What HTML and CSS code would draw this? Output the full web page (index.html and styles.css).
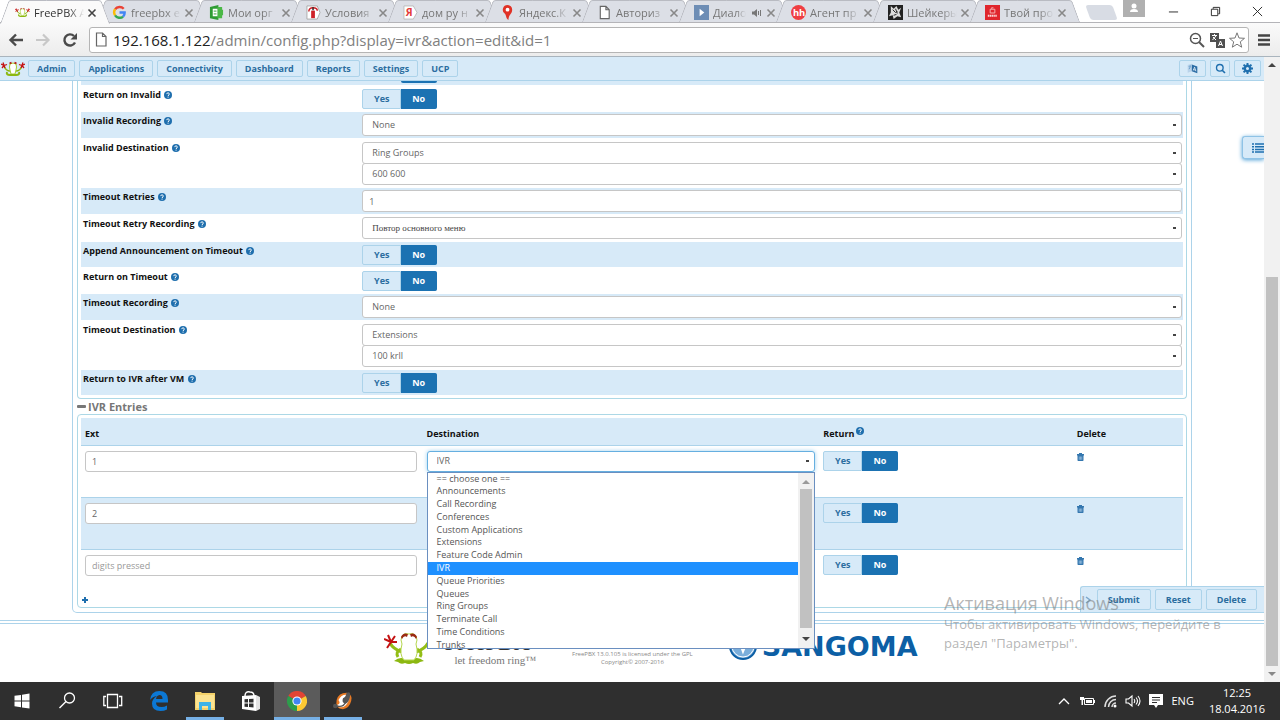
FILE: index.html
```html
<!DOCTYPE html>
<html lang="en">
<head>
<meta charset="utf-8">
<title>FreePBX Administration</title>
<link rel="stylesheet" href="styles.css">
</head>
<body>
<svg class="defs" aria-hidden="true">
  <symbol id="help" viewBox="0 0 16 16"><circle cx="8" cy="8" r="8" fill="currentColor"/><path d="M5.4 6.2C5.4 3 10.7 3 10.7 6.1 10.7 8 8.1 8 8.1 10M8.1 11.3v2" fill="none" stroke="#fff" stroke-width="2"/></symbol>
  <symbol id="trash" viewBox="0 0 14 16"><path d="M0 2h4V0h6v2h4v3H0zM1 5h12v9.500q0 1.500-1.500 1.500h-9Q1 16 1 14.500z" fill="currentColor"/><path d="M4.500 7v6.500M7 7v6.500M9.500 7v6.500" stroke="#d7eaf8"/></symbol>
  <symbol id="x" viewBox="0 0 10 10"><path d="M1.500 1.500l7 7M8.500 1.500l-7 7" fill="none" stroke="currentColor" stroke-width="1.600"/></symbol>
  <symbol id="page" viewBox="0 0 16 16"><path d="M3.500 1.500h6l3.500 3.500v9.500h-9.500zM9.500 1.500v3.500h3.500" fill="#fff" stroke="#666" stroke-width="1.200"/></symbol>
  <symbol id="frog" viewBox="0 0 24 16">
    <path d="M3 5q2 5 6 5M21 5q-2 5-6 5" fill="none" stroke="#8cb811" stroke-width="1.500"/>
    <path d="M9 3q3-2 6 0 1 3 0 6l-1 4h-4L9 9q-1-3 0-6z" fill="#fff" stroke="#a5cb2c"/>
    <path d="M6 11q-1 3 3 3h6q4 0 3-3" fill="none" stroke="#8cb811" stroke-width="2"/>
    <path d="M8.500 2.500l2-1M13.500 1.500l2 1" stroke="#b5120f" stroke-width="1.600"/>
    <path d="M0 3l3 1.500L1 7M2 1.500l1 3 3-1M3 4.500L4 7M24 3l-3 1.500L23 7M22 1.500l-1 3-3-1M21 4.500L20 7" stroke="#c41212" stroke-width="1.300" fill="none"/>
  </symbol>
</svg>

<header class="tabstrip">
  <div class="tab active"><svg class="fav"><use href="#frog"/></svg><span class="title">FreePBX A</span><button class="tabx" aria-label="Close tab"><svg><use href="#x"/></svg></button></div>
  <div class="tab"><svg class="fav" viewBox="0 0 16 16" fill="none" stroke-width="2.600"><path d="M12.500 4A6 6 0 0 0 3.300 4.500" stroke="#ea4335"/><path d="M3.300 4.500a6 6 0 0 0 0 6.500" stroke="#fbbc05"/><path d="M3.300 11a6 6 0 0 0 8.500 1.500" stroke="#34a853"/><path d="M11.800 12.500A6 6 0 0 0 13.500 8H8" stroke="#4285f4"/></svg><span class="title">freepbx e</span><button class="tabx" aria-label="Close tab"><svg><use href="#x"/></svg></button></div>
  <div class="tab"><svg class="fav" viewBox="0 0 16 16"><path d="M1 2l9-2v16l-9-2z" fill="#2f9c34"/><path d="M9 2h5v3h1v6h-1v3H9z" fill="#4bb847"/><path d="M4 4h5v8H4z" fill="#fff"/><path d="M5 6.500h3M5 9.500h3" stroke="#2f9c34"/></svg><span class="title">Мои орг</span><button class="tabx" aria-label="Close tab"><svg><use href="#x"/></svg></button></div>
  <div class="tab"><svg class="fav" viewBox="0 0 16 16"><path d="M1 1h11l3 7-3 7H1z" fill="#fff" stroke="#aaa"/><path d="M5.500 6h4v8h-4z" fill="#cf2027"/><path d="M3 7q0-4 4.500-4T12 6" fill="none" stroke="#cf2027" stroke-width="1.600"/><path d="M7.500 5.500v-3" stroke="#222" stroke-width="1.500"/></svg><span class="title">Условия</span><button class="tabx" aria-label="Close tab"><svg><use href="#x"/></svg></button></div>
  <div class="tab"><svg class="fav" viewBox="0 0 16 16"><path d="M1 1h10l4 7-4 7H1z" fill="#fff" stroke="#bbb"/><text x="3" y="12" font-size="11" font-weight="700" fill="#e33a3a">Я</text></svg><span class="title">дом ру н</span><button class="tabx" aria-label="Close tab"><svg><use href="#x"/></svg></button></div>
  <div class="tab"><svg class="fav" viewBox="0 0 16 16"><path d="M8 0a5 5 0 0 1 5 5c0 5-4 5-4 11-3-2-2-5-4-7A5 5 0 0 1 8 0z" fill="#e03226"/><circle cx="8" cy="5" r="2" fill="#fff"/></svg><span class="title">Яндекс.К</span><button class="tabx" aria-label="Close tab"><svg><use href="#x"/></svg></button></div>
  <div class="tab"><svg class="fav"><use href="#page"/></svg><span class="title">Авториз</span><button class="tabx" aria-label="Close tab"><svg><use href="#x"/></svg></button></div>
  <div class="tab"><svg class="fav" viewBox="0 0 16 16"><path d="M0 0h16v16H0z" fill="#6d8db5"/><path d="M6 4l5 4-5 4z" fill="#fff"/></svg><span class="title short">Диало</span><svg class="sound" viewBox="0 0 10 10"><path d="M0 3.500h2L5 1v8L2 6.500H0z" fill="#777"/><path d="M6.500 3v4M8.500 2v6" stroke="#777"/></svg><button class="tabx" aria-label="Close tab"><svg><use href="#x"/></svg></button></div>
  <div class="tab"><svg class="fav" viewBox="0 0 16 16"><circle cx="8" cy="8" r="8" fill="#ef3e42"/><text x="2" y="12" font-size="10" font-weight="700" fill="#fff">hh</text></svg><span class="title">Агент пр</span><button class="tabx" aria-label="Close tab"><svg><use href="#x"/></svg></button></div>
  <div class="tab"><svg class="fav" viewBox="0 0 16 16"><path d="M0 0h16v16H0z" fill="#222"/><path d="M3 1l3 3 3-3 2 4 3-2-2 5 2 5-4-1-4 3-1-4-4 1 2-4z" fill="#ddd"/><path d="M5 5l3 3 2-1M6 11l3-1M8 4l2 5" stroke="#222" fill="none"/></svg><span class="title">Шейкеры</span><button class="tabx" aria-label="Close tab"><svg><use href="#x"/></svg></button></div>
  <div class="tab"><svg class="fav" viewBox="0 0 16 16"><path d="M0 0h16v16H0z" fill="#e0262d"/><path d="M5.500 4.500h5v4h-5zM7 4V3h2" fill="none" stroke="#f6b6b6"/><path d="M3 11.500h10" stroke="#fbdada" stroke-width="2" stroke-dasharray="1.500 .5"/></svg><span class="title">Твой про</span><button class="tabx" aria-label="Close tab"><svg><use href="#x"/></svg></button></div>
  <button class="newtab" aria-label="New tab"></button>
  <div class="winctl">
    <button class="user" aria-label="User"><svg viewBox="0 0 22 17"><circle cx="11" cy="6" r="2.500" fill="#fff"/><path d="M7 12q0-3 4-3t4 3z" fill="#fff"/></svg></button>
    <button aria-label="Minimize"><svg viewBox="0 0 12 12"><path d="M1 6.500h10" stroke="#222"/></svg></button>
    <button aria-label="Restore"><svg viewBox="0 0 12 12"><path d="M1.500 3.500h7v7h-7zM3.500 3V1.500h7v7H9" fill="none" stroke="#222"/></svg></button>
    <button aria-label="Close"><svg viewBox="0 0 12 12"><path d="M1 1l10 10M11 1L1 11" stroke="#222"/></svg></button>
  </div>
</header>

<div class="toolbar">
  <button class="tool" aria-label="Back"><svg viewBox="0 0 16 16"><path d="M15 8H3M8 2.500L2.500 8 8 13.500" fill="none" stroke="#4a4a4a" stroke-width="2.400"/></svg></button>
  <button class="tool" aria-label="Forward"><svg viewBox="0 0 16 16"><path d="M1 8h12M8 2.500L13.500 8 8 13.500" fill="none" stroke="#c8c8c8" stroke-width="2.200"/></svg></button>
  <button class="tool" aria-label="Reload"><svg viewBox="0 0 16 16"><path d="M13 10.500A5.600 5.600 0 1 1 12 4" fill="none" stroke="#4a4a4a" stroke-width="2.400"/><path d="M15 1v6.500H8.500z" fill="#4a4a4a"/></svg></button>
  <div class="omnibox">
    <svg class="pg"><use href="#page"/></svg>
    <span class="url"><b>192.168.1.122</b>/admin/config.php?display=ivr&amp;action=edit&amp;id=1</span>
    <svg class="oi" viewBox="0 0 16 16"><circle cx="6.500" cy="6.500" r="5" fill="none" stroke="#555" stroke-width="1.500"/><path d="M10 10l5 5" stroke="#555" stroke-width="2"/><path d="M4 6.500h5" stroke="#555"/></svg>
    <svg class="oi" viewBox="0 0 16 16"><path d="M1 1h9v9H1zM7 7h9v9H7z" fill="#505050"/><path d="M3 3.500h5M5.500 2v2M3.500 8l3.500-4M4 5l3 3M9.500 14l2-5 2 5M10 12.500h3" fill="none" stroke="#fff"/></svg>
    <svg class="oi" viewBox="0 0 16 16"><path d="M8 .8l2 5.200 5.500.3-4.200 3.500 1.400 5.400L8 12.200l-4.700 3 1.400-5.400L.5 6.300 6 6z" fill="#fff" stroke="#777"/></svg>
  </div>
  <button class="tool" aria-label="Menu"><svg viewBox="0 0 16 16"><path d="M2 3.500h12M2 8h12M2 12.500h12" stroke="#444" stroke-width="2.600"/></svg></button>
</div>

<div class="window">
  <div class="viewport">
    <nav class="nav">
      <svg class="logo"><use href="#frog"/></svg>
      <button>Admin</button><button>Applications</button><button>Connectivity</button><button>Dashboard</button><button>Reports</button><button>Settings</button><button>UCP</button>
      <span class="spacer"></span>
      <button class="ic" aria-label="Language"><svg viewBox="0 0 16 16"><path d="M1 3l6-2v11l-6 2z" fill="#b9d3ea"/><path d="M7 2l8 3v10l-8-3z" fill="#2a6ca5"/><path d="M2.500 5l3-1M3 9l2-4" fill="none" stroke="#4a86bb"/><path d="M9 11l2-5 2 6M9.500 9.500l3 1" fill="none" stroke="#fff"/></svg></button>
      <button class="ic narrow" aria-label="Search"><svg viewBox="0 0 16 16"><circle cx="7" cy="7" r="4.800" fill="none" stroke="#1f6fae" stroke-width="2"/><path d="M10.500 10.500l4 4" stroke="#1f6fae" stroke-width="2.400"/></svg></button>
      <button class="ic" aria-label="Settings"><svg viewBox="0 0 16 16"><circle cx="8" cy="8" r="4" fill="none" stroke="#1f6fae" stroke-width="3.600"/><path d="M8 0v3M8 13v3M0 8h3M13 8h3M2.300 2.300l2 2M11.700 11.700l2 2M2.300 13.700l2-2M11.700 4.300l2-2" stroke="#1f6fae" stroke-width="2.800"/></svg></button>
    </nav>

    <main class="page">
      <form class="outer">
        <section class="box top">
          <div class="row sliver"><span></span><div class="stub"><i></i></div></div>
          <div class="row radio"><span class="lbl">Return on Invalid <svg><use href="#help"/></svg></span><fieldset class="yn"><input type="radio" name="a" id="a1"><label for="a1">Yes</label><input type="radio" name="a" id="a2" checked><label for="a2">No</label></fieldset></div>
          <div class="row alt"><label class="lbl" for="s1">Invalid Recording <svg><use href="#help"/></svg></label><div class="ctl"><select id="s1"><option>None</option></select></div></div>
          <div class="row dest"><label class="lbl" for="s2">Invalid Destination <svg><use href="#help"/></svg></label><div class="ctl"><select id="s2"><option>Ring Groups</option></select><select aria-label="Ring group"><option>600 600</option></select></div></div>
          <div class="row alt"><label class="lbl" for="t1">Timeout Retries <svg><use href="#help"/></svg></label><div class="ctl"><input type="text" id="t1" value="1"></div></div>
          <div class="row"><label class="lbl" for="s3">Timeout Retry Recording <svg><use href="#help"/></svg></label><div class="ctl"><select id="s3" class="serif"><option>Повтор основного меню</option></select></div></div>
          <div class="row alt radio"><span class="lbl">Append Announcement on Timeout <svg><use href="#help"/></svg></span><fieldset class="yn"><input type="radio" name="b" id="b1"><label for="b1">Yes</label><input type="radio" name="b" id="b2" checked><label for="b2">No</label></fieldset></div>
          <div class="row radio"><span class="lbl">Return on Timeout <svg><use href="#help"/></svg></span><fieldset class="yn"><input type="radio" name="c" id="c1"><label for="c1">Yes</label><input type="radio" name="c" id="c2" checked><label for="c2">No</label></fieldset></div>
          <div class="row alt"><label class="lbl" for="s4">Timeout Recording <svg><use href="#help"/></svg></label><div class="ctl"><select id="s4"><option>None</option></select></div></div>
          <div class="row dest"><label class="lbl" for="s5">Timeout Destination <svg><use href="#help"/></svg></label><div class="ctl"><select id="s5"><option>Extensions</option></select><select aria-label="Extension"><option>100 krll</option></select></div></div>
          <div class="row alt radio"><span class="lbl">Return to IVR after VM <svg><use href="#help"/></svg></span><fieldset class="yn"><input type="radio" name="d" id="d1"><label for="d1">Yes</label><input type="radio" name="d" id="d2" checked><label for="d2">No</label></fieldset></div>
        </section>

        <h2 class="sect"><i></i>IVR Entries</h2>

        <section class="box">
          <table class="entries">
            <colgroup><col class="c1"><col class="c2"><col class="c3"><col class="c4"></colgroup>
            <thead><tr><th>Ext</th><th>Destination</th><th>Return<svg class="sup"><use href="#help"/></svg></th><th>Delete</th></tr></thead>
            <tbody>
              <tr>
                <td><input type="text" aria-label="Ext" value="1"></td>
                <td><div class="open"><select class="focus" aria-label="Destination"><option>IVR</option></select>
                  <div class="menu">
                    <ul class="opts" role="listbox" aria-label="Destination options">
                      <li>== choose one ==</li><li>Announcements</li><li>Call Recording</li><li>Conferences</li><li>Custom Applications</li><li>Extensions</li><li>Feature Code Admin</li><li class="sel">IVR</li><li>Queue Priorities</li><li>Queues</li><li>Ring Groups</li><li>Terminate Call</li><li>Time Conditions</li><li>Trunks</li>
                    </ul>
                    <div class="bar"><svg viewBox="0 0 8 8"><path d="M0 6h8L4 2z" fill="#9a9a9a"/></svg><i></i><svg viewBox="0 0 8 8"><path d="M0 2h8L4 6z" fill="#444"/></svg></div>
                  </div></div></td>
                <td><fieldset class="yn"><input type="radio" name="e" id="e1"><label for="e1">Yes</label><input type="radio" name="e" id="e2" checked><label for="e2">No</label></fieldset></td>
                <td><button type="button" class="del" aria-label="Delete entry"><svg><use href="#trash"/></svg></button></td>
              </tr>
              <tr>
                <td><input type="text" aria-label="Ext" value="2"></td><td></td>
                <td><fieldset class="yn"><input type="radio" name="f" id="f1"><label for="f1">Yes</label><input type="radio" name="f" id="f2" checked><label for="f2">No</label></fieldset></td>
                <td><button type="button" class="del" aria-label="Delete entry"><svg><use href="#trash"/></svg></button></td>
              </tr>
              <tr>
                <td><input type="text" aria-label="Ext" placeholder="digits pressed"></td><td></td>
                <td><fieldset class="yn"><input type="radio" name="g" id="g1"><label for="g1">Yes</label><input type="radio" name="g" id="g2" checked><label for="g2">No</label></fieldset></td>
                <td><button type="button" class="del" aria-label="Delete entry"><svg><use href="#trash"/></svg></button></td>
              </tr>
            </tbody>
          </table>
          <button type="button" class="add" aria-label="Add entry"><svg viewBox="0 0 8 8"><path d="M4 1v6M1 4h6" stroke="#1f6fae" stroke-width="2"/></svg></button>
        </section>
      </form>

      <footer class="foot">
        <div class="fpbx">
          <svg class="bigfrog" viewBox="0 0 50 34">
            <path d="M6 11q3 6 12 9M44 11q-3 6-12 9" fill="none" stroke="#93bd16" stroke-width="3"/>
            <path d="M17 17q-6 3-3 8M33 17q6 3 3 8" fill="none" stroke="#93bd16" stroke-width="3"/>
            <path d="M10 29q6-5 11-2h8q5-3 11 2l-4 1q-3 3-7 1-4 2-8 0-4 2-7-1z" fill="#8cb811"/>
            <path d="M18 4q3-4 7-2 4-2 7 2 2 4 0 8 3 11-2 16h-10q-5-5-2-16-2-4 0-8z" fill="#fff" stroke="#b5d64e"/>
            <path d="M17 5q2-5 7-3l-1 3q-3-2-5 2zM26 2q5-2 7 3l-1 2q-2-4-5-2z" fill="#9b2a12"/>
            <path d="M0 7l7 3M4 3l3 7M11 4l-4 6M13 10H7M3 16l4-6" stroke="#c41212" stroke-width="2" fill="none"/>
          </svg>
          <div><div class="fname">FreePBX</div><div class="slogan">let freedom ring™</div></div>
        </div>
        <div class="legal">FreePBX 13.0.105 is licensed under the GPL<br>Copyright© 2007-2016</div>
        <div class="sangoma"><svg viewBox="0 0 28 28"><circle cx="14" cy="14" r="13" fill="#7aaedb" stroke="#0c5fa5" stroke-width="2"/><circle cx="14" cy="14" r="11" fill="none" stroke="#fff"/><path d="M10 8l4 11 5-12" fill="none" stroke="#fff" stroke-width="2.500"/></svg><span>SANGOMA</span></div>
      </footer>
    </main>

    <button class="side" aria-label="Show list"><svg viewBox="0 0 12 10"><path d="M0 1h2M3 1h9M0 3.700h2M3 3.700h9M0 6.400h2M3 6.400h9M0 9h2M3 9h9" stroke="#1f6fae" stroke-width="1.500"/></svg></button>
    <div class="actions"><svg viewBox="0 0 8 8"><path d="M1 1l4 3-4 3" fill="none" stroke="#7ba7cc" stroke-width="1.500"/></svg><button>Submit</button><button>Reset</button><button>Delete</button></div>
    <div class="watermark"><div class="wtitle">Активация Windows</div><div class="wtext">Чтобы активировать Windows, перейдите в раздел "Параметры".</div></div>
  </div>
  <div class="scroll"><svg viewBox="0 0 8 8"><path d="M0 6h8L4 2z" fill="#444"/></svg><i></i><svg viewBox="0 0 8 8"><path d="M0 2h8L4 6z" fill="#888"/></svg></div>
</div>

<div class="taskbar">
  <button class="start" aria-label="Start"><svg viewBox="0 0 20 20"><path d="M2.500 4.800L9 3.900v5.700H2.500zM10 3.700L17.500 2.500v7.100H10zM2.500 10.500H9v5.700l-6.500-.9zM10 10.500h7.500v7.100L10 16.400z" fill="#fff"/></svg></button>
  <button aria-label="Search"><svg viewBox="0 0 20 20"><circle cx="12.500" cy="7" r="5" fill="none" stroke="#fff" stroke-width="1.300"/><path d="M9 10.500L2.500 17" stroke="#fff" stroke-width="1.500"/></svg></button>
  <button aria-label="Task view"><svg viewBox="0 0 20 20"><path d="M4.500 3.500h10v13h-10zM3 5.500H.8v9H3M16 5.500h2.700v9H16" fill="none" stroke="#fff" stroke-width="1.300"/></svg></button>
  <button aria-label="Edge"><svg viewBox="0 0 20 20"><path d="M1 9Q2 0 10.500 0 19 0 19 9v2.500H7q0 4.500 5.500 4.500 3 0 5.500-1.500v4Q15 20 11.500 20 3 20 3 12.500 3 8 8 5 3.500 5.500 1 9zM7 8h6.500q0-4-3-4Q7.500 4.500 7 8z" fill="#0c78d4"/></svg></button>
  <button class="run" aria-label="Explorer"><svg viewBox="0 0 20 20"><path d="M0 1h6l1 1h13v17H0z" fill="#f4d26a"/><path d="M1 4h18v13H1z" fill="#fbe391"/><path d="M4 11h12v8h-3v-4H7v4H4z" fill="#3db3e8"/></svg></button>
  <button aria-label="Store"><svg viewBox="0 0 20 20"><path d="M1 5l14-1v16L1 18z" fill="#fff"/><path d="M15 4l4 2v12l-4 2z" fill="#e4e4e4"/><path d="M4 5q0-5 5-4 4 0 4 4" fill="none" stroke="#fff" stroke-width="1.500"/><path d="M3.500 8.300l3.500-.2v3.400H3.500zM8 8l4.500-.3v3.800H8zM3.500 12.500H7V16l-3.500-.3zM8 12.500h4.500v4L8 16.100z" fill="#2f2f2f"/></svg></button>
  <button class="run cur" aria-label="Chrome"><svg viewBox="0 0 20 20"><path d="M10 10L1.300 5A10 10 0 0 1 18.700 5z" fill="#e24434"/><path d="M10 10l8.700-5A10 10 0 0 1 10 20z" fill="#fcc934"/><path d="M10 10v10A10 10 0 0 1 1.300 5z" fill="#2d9d4b"/><circle cx="10" cy="10" r="4.600" fill="#fff"/><circle cx="10" cy="10" r="3.600" fill="#4285f4"/></svg></button>
  <button class="run" aria-label="Media app"><svg viewBox="0 0 22 20"><path d="M4 9q2-8 11-8 7 2 5 9-2 8-9 9-9 0-7-10z" fill="#e77a25"/><path d="M6 9q3-6 8-6 5 2 3 7-3 7-8 7-5 0-4-3 4-1 1-5z" fill="#fff"/><path d="M15 1q4-2 4 2-1 8-5 10-5-1-3-6 3-1 4-6z" fill="#555"/><circle cx="2.500" cy="15.500" r="2.500" fill="#555"/><path d="M3 15q8 3 11-4" fill="none" stroke="#555" stroke-width="1.500"/></svg></button>
  <span class="spacer"></span>
  <div class="tray">
    <svg viewBox="0 0 16 16"><path d="M3 11l5-5 5 5" fill="none" stroke="#fff" stroke-width="1.300"/></svg>
    <svg viewBox="0 0 16 16"><path d="M5.500 5.500h9v6h-9z" fill="none" stroke="#fff"/><path d="M7 7h6v3H7zM15 7h1v3h-1zM1 4h4v3H4v5H2.500V7H1z" fill="#fff"/></svg>
    <svg viewBox="0 0 16 16"><path d="M3 14A11 11 0 0 1 14 3M6.500 14A7.500 7.500 0 0 1 14 6.500M10 14a4 4 0 0 1 4-4" fill="none" stroke="#ddd" stroke-width="1.500"/><circle cx="13" cy="13" r="1.500" fill="#fff"/></svg>
    <svg viewBox="0 0 16 16"><path d="M1 6h2.500L7 3v10l-3.500-3H1zM9 6q1.500 2 0 4M11 4.500q3 3.500 0 7M13 3q4 5 0 10" fill="none" stroke="#fff" stroke-width="1.100"/></svg>
    <svg viewBox="0 0 16 16"><path d="M1 1h14v11H10l-2 3-2-3H1z" fill="#fff"/><path d="M4 4.500h8M4 7h8M4 9.500h5" stroke="#2f2f2f"/></svg>
    <span class="lang">ENG</span>
    <div class="clock">12:25<br>18.04.2016</div>
  </div>
</div>
</body>
</html>
```
FILE: styles.css
```css
* { box-sizing: border-box; }
body {
  margin: 0; height: 100vh; display: flex; flex-direction: column; overflow: hidden;
  background: #fff; color: #111; font-family: "Open Sans", "Noto Sans", sans-serif; font-size: 9px; line-height: 12px;
}
button { font: inherit; border: 0; padding: 0; background: none; color: inherit; }
.defs { position: absolute; width: 0; height: 0; }
.spacer { flex: 1; }

/* browser tabs */
.tabstrip { display: flex; height: 23px; flex: none; padding-right: 12px; border-bottom: 1px solid #b4b4b8; }
.tab {
  position: relative; isolation: isolate; width: 109px; margin-right: -12px; flex: none; height: 23px;
  display: flex; align-items: center; padding: 2px 10px 0 15px; font-size: 11px; line-height: 16px; color: #777;
}
.tab::before, .tab::after {
  content: ""; position: absolute; z-index: -1; top: 0; bottom: 1px; background: #dcdfe6; border-top: 1px solid #b9bbc2;
}
.tab::before { left: 0; right: 50%; transform: skewX(-20deg); transform-origin: bottom; border-left: 1px solid #b4b6bd; border-radius: 3px 0 0 0; }
.tab::after { left: 50%; right: 0; transform: skewX(20deg); transform-origin: bottom; border-right: 1px solid #b4b6bd; border-radius: 0 3px 0 0; }
.tab.active { z-index: 3; color: #333; }
.tab.active::before, .tab.active::after { background: #fafafa; bottom: -1px; }
.fav { width: 15px; height: 15px; flex: none; margin-right: 4px; }
.title {
  width: 50px; overflow: hidden; white-space: nowrap; flex: none; margin-right: 3px;
  mask-image: linear-gradient(90deg, #000 70%, transparent);
}
.title.short { width: 33px; }
.sound { width: 10px; height: 10px; margin: 0 4px 0 3px; flex: none; }
.tabx { height: 10px; color: #888; }
.tab.active .tabx { color: #444; }
.tabx svg { width: 10px; height: 10px; display: block; }
.newtab { width: 27px; height: 15px; margin: 5px 0 0 21px; flex: none; background: #d8dce4; transform: skewX(20deg); border-radius: 3px; }
.winctl { margin-left: auto; display: flex; gap: 31px; align-items: center; height: 23px; padding-right: 5px; }
.winctl svg { width: 11px; height: 11px; display: block; }
.winctl .user { background: #b0b0b0; align-self: flex-start; margin-right: -8px; }
.winctl .user svg { width: 22px; height: 17px; }

/* browser toolbar */
.toolbar {
  display: flex; align-items: center; height: 34px; flex: none; gap: 11px; padding: 0 8px;
  background: linear-gradient(#fafafa, #ececec); border-bottom: 1px solid #a9b4bd;
}
.tool svg { width: 16px; height: 16px; display: block; }
.omnibox {
  flex: 1; display: flex; align-items: center; height: 26px; padding: 0 3px; gap: 4px;
  background: #fff; border: 1px solid #b5b5b5; border-radius: 3px; margin-right: -4px;
}
.pg { width: 16px; height: 17px; }
.url { flex: 1; font-size: 15px; line-height: 20px; color: #808080; }
.url b { font-weight: 400; color: #222; }
.oi { width: 16px; height: 16px; }

/* web page area */
.window { flex: 1; min-height: 0; display: flex; }
.viewport { position: relative; flex: 1; min-width: 0; overflow: hidden; }
.scroll { width: 16px; background: #f1f1f1; display: flex; flex-direction: column; align-items: center; padding: 4px 0; }
.scroll svg { width: 8px; height: 8px; flex: none; }
.scroll i { width: 12px; margin: auto 0 4px; height: 63%; background: #c1c1c1; }

.nav {
  position: relative; height: 24px; display: flex; align-items: center; gap: 4px; padding: 0 3px 0 1px;
  background: #d7eaf8; border-bottom: 1px solid #acd3ea;
}
.nav .logo { width: 24px; height: 16px; margin-right: -1px; }
.nav button, .actions button {
  height: 17px; padding: 0 8px; border: 1px solid #acd3ea; border-radius: 2px; font-weight: 700; color: #2b6d9f;
}
.nav .ic { width: 27px; padding: 0 7px; }
.nav .narrow { width: 20px; padding: 0 4px; }
.nav .ic svg { width: 11px; height: 11px; display: block; margin: auto; }

.outer { margin: 0 72px; border: 1px solid #acd3ea; border-top: 0; border-radius: 0 0 5px 5px; padding: 0 4px 4px; }
.box { border: 1px solid #acd8e6; border-radius: 4px; padding: 3px; }
.box.top { border-top: 0; padding: 0 3px 2px; border-radius: 0 0 4px 4px; }
.row { display: grid; grid-template-columns: 1fr 3fr; padding: 2px 1px 2px 0; margin-bottom: 1px; }
.row.radio { padding: 3px 1px 2px 0; }
.row.dest { padding-top: 3px; }
.alt { background: #d7eaf8; }
.row.sliver { background: #d7eaf8; height: 4px; padding: 0; }
.stub { padding-left: 6px; display: flex; }
.stub i { width: 36px; margin-left: 38px; height: 2px; background: #1b72b2; border-radius: 0 0 2px 2px; }
.lbl { padding: 0 2px; font-weight: 700; }
.row:not(.radio) .lbl { padding-top: 1px; }
.row.dest .lbl { padding-top: 0; }
.lbl svg { width: 8px; height: 8px; color: #1f6fae; margin-left: 1px; vertical-align: -1px; }
.ctl { padding-left: 6px; display: flex; flex-direction: column; }
select, input[type=text] {
  display: block; width: 100%; height: 22px; border: 1px solid #c6c6c6; border-radius: 3px; background: #fff;
  font: inherit; color: #666; padding: 0 9px; margin: 0; appearance: none; outline: 0;
}
select {
  background: linear-gradient(#444, #444) no-repeat right 5px center / 3px 2px, #fff;
}
select + select { margin-top: -1px; }
input[type=text] { padding: 0 6px; }
input::placeholder { color: #999; }
.serif { font-family: "Liberation Serif", serif; color: #444; }
.yn { display: flex; border: 0; margin: 0; padding: 0 0 0 6px; height: 20px; min-width: 0; }
.yn input { position: absolute; opacity: 0; width: 1px; height: 1px; margin: 0; }
.yn label {
  width: 39px; text-align: center; line-height: 18px; font-weight: 700; color: #2b6d9f;
  background: #d7eaf8; border: 1px solid #acd3ea; border-radius: 2px 0 0 2px;
}
.yn input + label + input + label { width: 36px; border-radius: 0 2px 2px 0; border-left: 0; }
.yn input:checked + label { background: #1b72b2; border-color: #1b72b2; color: #fff; }

.sect { margin: 0; font-size: 11px; line-height: 15px; color: #777; display: flex; align-items: center; gap: 2px; }
.sect i { width: 9px; height: 3px; background: #777; border-radius: 1px; }

.entries { width: 100%; table-layout: fixed; border-collapse: collapse; }
.c1 { width: 31%; } .c2 { width: 36%; } .c3 { width: 23%; } .c4 { width: 10%; }
.entries th { text-align: left; vertical-align: bottom; background: #d7eaf8; height: 27px; padding: 0 4px 5px; border-bottom: 1px solid #acd3ea; }
.entries td { vertical-align: top; height: 52px; padding: 5px 4px 0; border-bottom: 1px solid #acd3ea; }
.entries tr:last-child td { height: 46px; border: 0; }
.entries tbody tr:nth-child(2) { background: #d7eaf8; }
.entries td:first-child { padding-right: 6px; }
.entries input[type=text], .entries select { height: 21px; }
.entries .yn { padding: 0; }
.sup { width: 8px; height: 8px; color: #1f6fae; margin-left: 2px; vertical-align: 2px; }
.del svg { width: 7px; height: 8px; display: block; color: #3477af; margin-top: 2px; }
.add { display: block; margin: 0; padding: 1px 0 0; }
.add svg { width: 8px; height: 8px; display: block; }

.open { position: relative; }
.entries .focus { border-color: #66afe0; box-shadow: 0 0 4px #9fd0ef; }
.menu {
  position: absolute; z-index: 5; top: 21px; left: 0; right: 0; height: 177px; overflow: hidden;
  display: flex; background: #fff; border: 1px solid #6a8fc0;
}
.opts { flex: 1; height: 179px; display: grid; grid-auto-rows: 1fr; list-style: none; margin: 0; padding: 0; color: #555; }
.opts li { padding-left: 9px; }
.opts .sel { background: #1e90ff; color: #fff; }
.bar { width: 16px; background: #f1f1f1; display: flex; flex-direction: column; align-items: center; padding: 5px 0; gap: 3px; }
.bar svg { width: 8px; height: 8px; }
.bar i { width: 12px; height: 139px; background: #c1c1c1; margin-bottom: auto; }

.foot {
  margin-top: 7px; border-top: 4px double #acd3ea; display: flex; justify-content: center; gap: 36px;
  padding: 8px 0 0 38px; height: 62px;
}
.fpbx { display: flex; gap: 10px; }
.bigfrog { width: 50px; height: 34px; }
.fname { font: 23px/22px "Liberation Serif", serif; color: #333; }
.slogan { font: 11px/12px "Liberation Serif", serif; color: #777; padding-left: 10px; }
.legal { padding-top: 18px; font-size: 6px; line-height: 8px; color: #888; text-align: center; }
.sangoma { display: flex; gap: 5px; color: #0c5fa5; font: 700 27px/30px "DejaVu Sans", sans-serif; }
.sangoma svg { width: 28px; height: 28px; }

.side {
  position: absolute; right: 0; top: 79px; width: 22px; height: 23px; background: #d7eaf8;
  border: 1px solid #8fc3e6; border-right: 0; border-radius: 3px 0 0 3px; box-shadow: 0 1px 4px #4d9fd6;
}
.side svg { width: 12px; height: 10px; display: block; margin: 0 0 0 auto; }
.actions {
  position: absolute; right: 0; bottom: 69px; height: 27px; display: flex; align-items: center; gap: 4px;
  padding: 0 7px 0 4px; background: #d7eaf8; border: 1px solid #acd3ea; border-right: 0; border-radius: 3px 0 0 0;
}
.actions svg { width: 8px; height: 8px; }
.actions button { height: 21px; padding: 0 10px; }
.watermark { position: absolute; left: 944px; bottom: 29px; width: 300px; color: rgba(130, 130, 130, .6); pointer-events: none; }
.wtitle { font-size: 18px; line-height: 24px; }
.wtext { font-size: 13px; line-height: 19px; }

/* taskbar */
.taskbar { flex: none; height: 38px; display: flex; background: #2f2f2f; color: #fff; }
.taskbar button { width: 46px; border-bottom: 3px solid transparent; }
.taskbar button svg { width: 20px; height: 20px; display: block; margin: 2px auto 0; }
.taskbar .start { width: 44px; }
.taskbar .run { width: 38px; margin: 0 4px; border-bottom-color: #76b0e6; }
.taskbar .cur { width: 46px; margin: 0; background: #5b5b5b; }
.tray { display: flex; align-items: center; gap: 7px; padding-right: 15px; font-size: 11px; line-height: 16px; }
.tray svg { width: 16px; height: 16px; }
.clock { text-align: center; margin-left: 8px; }
```
